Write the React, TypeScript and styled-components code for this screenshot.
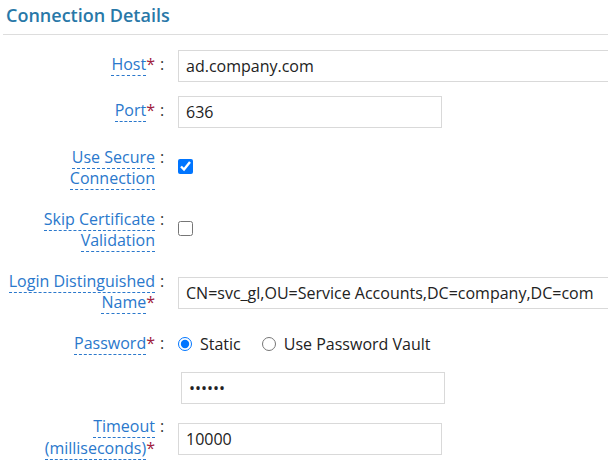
import React from "react";
import styled, { createGlobalStyle } from "styled-components";

const Global = createGlobalStyle`
  html, body {
    margin: 0;
    padding: 0;
    background: #ffffff;
    overflow: hidden;
  }
  body {
    font-family: "Open Sans", "Liberation Sans", Arial, sans-serif;
    color: #222;
  }
`;

const Page = styled.div`
  width: 608px;
  height: 469px;
  overflow: hidden;
`;

const Header = styled.div`
  margin-left: 3px;
  padding: 3px 0 7px 3px;
  border-bottom: 1px solid #dddddd;
`;

const Title = styled.h2`
  margin: 0;
  font-size: 18px;
  line-height: 24px;
  font-weight: 600;
  color: #2878a8;
`;

const Form = styled.div`
  display: flex;
  flex-direction: column;
  padding-top: 8px;
`;

const Row = styled.div<{ $pt?: number; $pb?: number }>`
  display: flex;
  align-items: center;
  padding-top: ${(p) => (p.$pt ?? 7)}px;
  padding-bottom: ${(p) => (p.$pb ?? 7)}px;
`;

const LabelCell = styled.div`
  display: flex;
  align-items: flex-start;
  width: 178px;
  flex-shrink: 0;
  padding: 1.5px 0 3.5px;
  font-size: 16px;
  line-height: 21.5px;
`;

const LabelText = styled.label`
  width: 155px;
  text-align: right;
`;

const Term = styled.span`
  color: #2a78cc;
  border-bottom: 1px dashed #2a78cc;
`;

const Req = styled.span`
  color: #a0203c;
`;

const Colon = styled.span`
  color: #333;
  margin-left: 5px;
`;

const TextInput = styled.input<{ $wide?: boolean; $indent?: number }>`
  box-sizing: border-box;
  width: ${(p) => (p.$wide ? "460px" : "264px")};
  height: 32px;
  margin: 0 0 0 ${(p) => p.$indent ?? 0}px;
  padding: 0 7px;
  border: 1px solid #d9d9d9;
  border-radius: 0;
  outline: none;
  background: #fff;
  font-family: "Open Sans", "Liberation Sans", Arial, sans-serif;
  font-size: 16px;
  color: #222;
  flex-shrink: 0;
`;

const Check = styled.input`
  width: 15px;
  height: 15px;
  margin: 0 0 5px 0;
  flex-shrink: 0;
`;

const RadioGroup = styled.div`
  display: flex;
  align-items: center;
  font-size: 16px;
  line-height: 21.5px;
  color: #222;
`;

const RadioOption = styled.label`
  display: flex;
  align-items: center;
  gap: 8px;
  margin-right: 21px;
`;

const Radio = styled.input`
  width: 14px;
  height: 14px;
  margin: 0;
`;

const Spacer = styled.div`
  width: 178px;
  flex-shrink: 0;
`;

type LabelProps = { text: string; required?: boolean };

const FieldLabel: React.FC<LabelProps> = ({ text, required }) => (
  <LabelCell>
    <LabelText>
      <Term>{text}</Term>
      {required ? <Req>*</Req> : null}
    </LabelText>
    <Colon>:</Colon>
  </LabelCell>
);

export default function App() {
  return (
    <Page>
      <Global />
      <Header>
        <Title>Connection Details</Title>
      </Header>
      <Form>
        <Row>
          <FieldLabel text="Host" required />
          <TextInput $wide defaultValue="ad.company.com" />
        </Row>
        <Row>
          <FieldLabel text="Port" required />
          <TextInput defaultValue="636" />
        </Row>
        <Row $pt={10}>
          <FieldLabel text="Use Secure Connection" />
          <Check type="checkbox" defaultChecked />
        </Row>
        <Row>
          <FieldLabel text="Skip Certificate Validation" />
          <Check type="checkbox" />
        </Row>
        <Row>
          <FieldLabel text="Login Distinguished Name" required />
          <TextInput $wide defaultValue="CN=svc_gl,OU=Service Accounts,DC=company,DC=com" />
        </Row>
        <Row>
          <FieldLabel text="Password" required />
          <RadioGroup>
            <RadioOption>
              <Radio type="radio" name="pw" defaultChecked />
              Static
            </RadioOption>
            <RadioOption>
              <Radio type="radio" name="pw" />
              Use Password Vault
            </RadioOption>
          </RadioGroup>
        </Row>
        <Row $pt={7} $pb={4}>
          <Spacer />
          <TextInput type="password" $indent={3} defaultValue="secret" />
        </Row>
        <Row>
          <FieldLabel text="Timeout (milliseconds)" required />
          <TextInput defaultValue="10000" />
        </Row>
      </Form>
    </Page>
  );
}
